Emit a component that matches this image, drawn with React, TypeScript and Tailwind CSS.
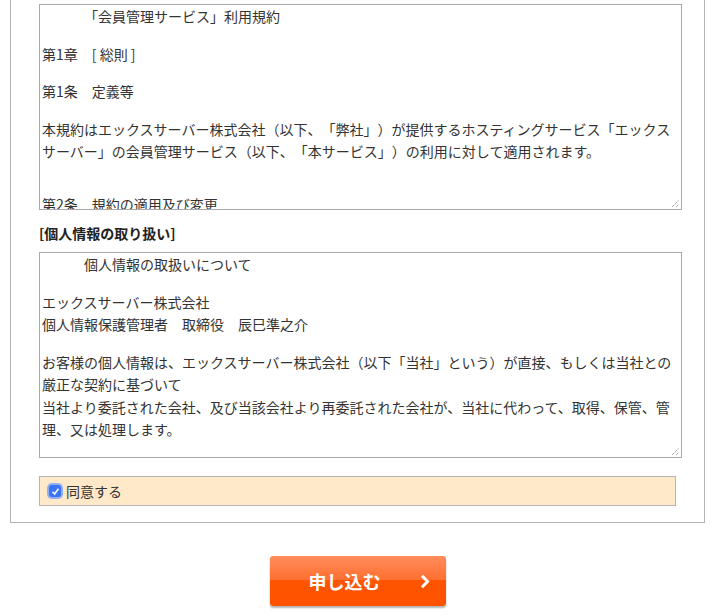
import React from "react";

type Line = { t: string; blank?: boolean };

const terms: Line[] = [
  { t: "　　　「会員管理サービス」利用規約" },
  { t: "", blank: true },
  { t: "第1章　[ 総則 ]" },
  { t: "", blank: true },
  { t: "第1条　定義等" },
  { t: "", blank: true },
  { t: "本規約はエックスサーバー株式会社（以下、「弊社」）が提供するホスティングサービス「エックス" },
  { t: "サーバー」の会員管理サービス（以下、「本サービス」）の利用に対して適用されます。" },
  { t: "", blank: true },
  { t: "", blank: true },
  { t: "第2条　規約の適用及び変更" },
  { t: "", blank: true },
];

const privacy: Line[] = [
  { t: "　　　個人情報の取扱いについて" },
  { t: "", blank: true },
  { t: "エックスサーバー株式会社" },
  { t: "個人情報保護管理者　取締役　辰巳準之介" },
  { t: "", blank: true },
  { t: "お客様の個人情報は、エックスサーバー株式会社（以下「当社」という）が直接、もしくは当社との" },
  { t: "厳正な契約に基づいて" },
  { t: "当社より委託された会社、及び当該会社より再委託された会社が、当社に代わって、取得、保管、管" },
  { t: "理、又は処理します。" },
  { t: "", blank: true },
];

function TextBox({ lines }: { lines: Line[] }) {
  return (
    <div className="relative h-[206px] w-[643px] overflow-hidden border border-[#a9a9a9] bg-white px-[2px] pt-[0px] [text-spacing-trim:space-all]">
      {lines.map((l, i) =>
        l.blank ? (
          <div key={i} className="h-[15px]" />
        ) : (
          <div key={i} className="h-[22.5px] whitespace-nowrap leading-[22.5px]">
            {l.t}
          </div>
        )
      )}
      <svg
        className="absolute bottom-[1px] right-[1px]"
        width="9"
        height="9"
        viewBox="0 0 9 9"
      >
        <line x1="1" y1="8" x2="8" y2="1" stroke="#8a8a8a" strokeWidth="1" strokeDasharray="1 1" />
        <line x1="5" y1="8" x2="8" y2="5" stroke="#8a8a8a" strokeWidth="1" strokeDasharray="1 1" />
      </svg>
    </div>
  );
}

export default function App() {
  return (
    <div className="min-h-[616px] bg-white font-['Noto_Sans_CJK_JP','Noto_Sans_CJK_SC',sans-serif] text-[14px] text-[#333333]">
      <div className="ml-[10px] w-[695px] border border-t-0 border-[#b3b3b3] pb-[16px] pl-[28px] pt-[4px]">
        <TextBox lines={terms} />
        <div className="flex h-[42px] items-center pt-[4px] font-bold text-[#222222]">[個人情報の取り扱い]</div>
        <TextBox lines={privacy} />
        <label className="mt-[18px] flex h-[30px] w-[637px] items-center border border-[#b5b5b5] bg-[#ffe9c9] pl-[9px]">
          <span className="flex h-[12px] w-[12px] items-center justify-center rounded-[3px] bg-[#3b74f1] ring-[2px] ring-[#94adf3]">
            <svg width="9" height="9" viewBox="0 0 9 9">
              <polyline points="1.5,4.8 3.6,7 7.5,1.8" fill="none" stroke="white" strokeWidth="1.6" />
            </svg>
          </span>
          <span className="ml-[5px]">同意する</span>
        </label>
      </div>
      <div className="ml-[10px] flex w-[695px] justify-center pt-[33px]">
        <button className="flex h-[50px] w-[176px] items-center justify-between rounded-[3px] bg-[linear-gradient(to_bottom,#ff8d5c_0%,#ff6f30_48%,#ff5400_49%,#ff5200_100%)] pl-[39px] pr-[16px] text-[18px] font-bold text-white shadow-[0_2px_2px_rgba(0,0,0,0.3)]">
          <span>申し込む</span>
          <svg width="10" height="15" viewBox="0 0 10 15">
            <polyline points="2,1.8 7.5,7.5 2,13.2" fill="none" stroke="white" strokeWidth="3" />
          </svg>
        </button>
      </div>
    </div>
  );
}
